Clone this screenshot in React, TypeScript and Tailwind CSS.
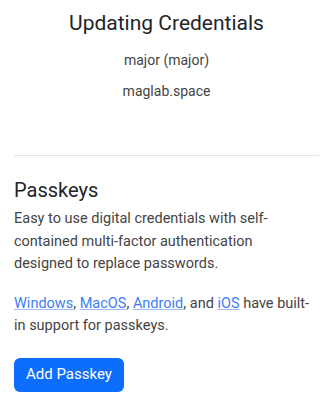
export default function App() {
  return (
    <div className="min-h-screen bg-white px-[14px] font-['Roboto',sans-serif] text-[#212529]">
      {/* Header */}
      <div className="pt-[9px] text-center">
        <h1 className="text-[21px] leading-[28px]">Updating Credentials</h1>
        <p className="mt-[13px] text-[14px] leading-[20px] text-[#444]">major (major)</p>
        <p className="mt-[11px] text-[14px] leading-[20px] text-[#444]">maglab.space</p>
      </div>

      <hr className="mt-[54px] border-t border-[#e3e3e3]" />

      {/* Passkeys */}
      <section className="pt-[20px]">
        <h2 className="text-[20px] leading-[28px]">Passkeys</h2>
        <p className="mt-[4px] max-w-[270px] text-[14.5px] leading-[22.5px] text-[#444]">
          Easy to use digital credentials with self-contained multi-factor authentication designed to
          replace passwords.
        </p>
        <p className="mt-[17px] text-[14.5px] leading-[22px] text-[#444]">
          <a href="#" className="text-[#3d7ef6] underline decoration-[#9dbdf7]">Windows</a>,{' '}
          <a href="#" className="text-[#3d7ef6] underline decoration-[#9dbdf7]">MacOS</a>,{' '}
          <a href="#" className="text-[#3d7ef6] underline decoration-[#9dbdf7]">Android</a>, and{' '}
          <a href="#" className="text-[#3d7ef6] underline decoration-[#9dbdf7]">iOS</a> have built-in
          support for passkeys.
        </p>
        <button className="mt-[21px] h-[34px] rounded-[6px] bg-[#0d6efd] px-[12px] text-[15px] text-white">
          Add Passkey
        </button>
      </section>
    </div>
  );
}
